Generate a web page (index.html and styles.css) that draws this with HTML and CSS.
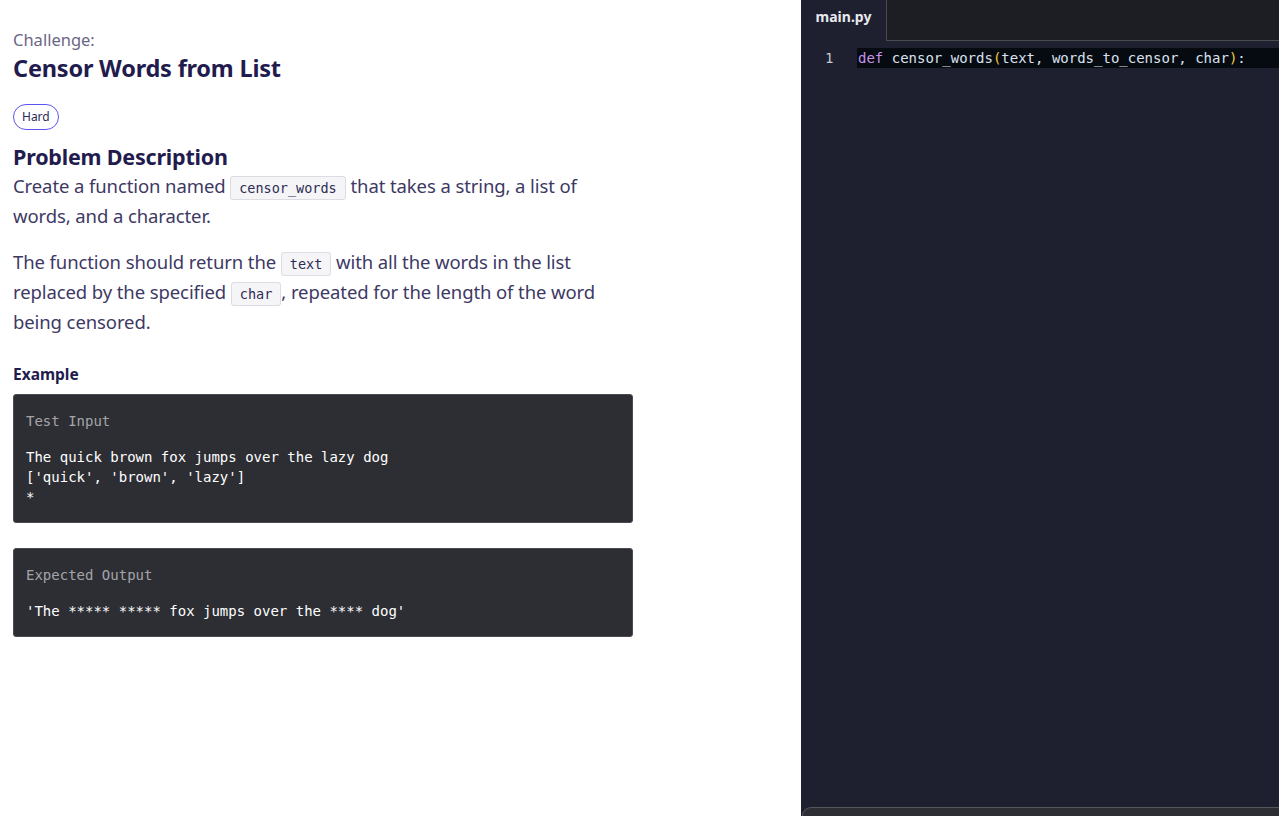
FILE: index.html
```html
<!DOCTYPE html>
<html>
<head>
<meta charset="utf-8">
<link rel="stylesheet" href="styles.css">
</head>
<body>
<div class="page">
  <main class="lesson">
    <div class="eyebrow">Challenge:</div>
    <h1 class="title">Censor Words from List</h1>
    <span class="badge">Hard</span>
    <h2 class="section">Problem Description</h2>
    <p class="para">Create a function named <code class="ic">censor_words</code> that takes a string, a list of words, and a character.</p>
    <p class="para">The function should return the <code class="ic">text</code> with all the words in the list replaced by the specified <code class="ic">char</code>, repeated for the length of the word being censored.</p>
    <h3 class="sub">Example</h3>
    <div class="codebox">
      <div class="cb-label">Test Input</div>
      <pre class="cb-code">The quick brown fox jumps over the lazy dog
['quick', 'brown', 'lazy']
*</pre>
    </div>
    <div class="codebox">
      <div class="cb-label">Expected Output</div>
      <pre class="cb-code">'The ***** ***** fox jumps over the **** dog'</pre>
    </div>
  </main>
  <section class="editor">
    <div class="tabs">
      <div class="tab">main.py</div>
      <div class="tab-rest"></div>
    </div>
    <div class="code">
      <div class="line">
        <span class="ln">1</span>
        <span class="lc"><span class="kw">def</span> censor_words<span class="par">(</span>text, words_to_censor, char<span class="par">)</span>:</span>
      </div>
    </div>
    <div class="bottom"></div>
  </section>
</div>
</body>
</html>
```
FILE: styles.css
```css
* { box-sizing: border-box; }
html, body { margin: 0; height: 100%; }
body { background: #fff; font-family: "Noto Sans", "Open Sans", sans-serif; }
.page { display: flex; height: 816px; overflow: hidden; }
.lesson { width: 801px; flex: none; padding: 29px 0 0 13px; }
.eyebrow { font-size: 16.5px; color: #6b6686; line-height: 22px; }
.title { margin: 2px 0 0; font-size: 23.5px; font-weight: 700; color: #221b4d; line-height: 30px; letter-spacing: -0.2px; }
.badge { display: inline-block; margin-top: 21px; height: 26px; padding: 0 8px; border: 1px solid #5a55f0; border-radius: 13px; font-size: 12px; line-height: 24px; color: #2d2a55; }
.section { margin: 13px 0 0; font-size: 21.5px; font-weight: 700; color: #221b4d; line-height: 28px; letter-spacing: -0.2px; }
.para { margin: 0 0 16px; width: 612px; font-size: 18.5px; line-height: 30px; color: #3e3964; letter-spacing: -0.1px; }
.ic { font-family: "DejaVu Sans Mono", monospace; font-size: 13.5px; line-height: 1; color: #2d2a55; background: #f5f5f7; border: 1px solid #dcdce2; border-radius: 3px; padding: 3px 8px; letter-spacing: 0; }
.sub { margin: 26px 0 0; font-size: 15.5px; font-weight: 700; color: #221b4d; line-height: 22px; }
.codebox { width: 620px; margin-top: 9px; background: #2d2e34; border: 1px solid #4a4b50; border-radius: 3px; padding: 16px 12px 15px; }
.codebox + .codebox { margin-top: 25px; }
.cb-label { font-family: "DejaVu Sans Mono", monospace; font-size: 14px; line-height: 20px; color: #a4a4a8; margin-bottom: 16px; }
.cb-code { margin: 0; font-family: "DejaVu Sans Mono", monospace; font-size: 14px; line-height: 20px; color: #ffffff; }
.editor { flex: 1; background: #1e2030; display: flex; flex-direction: column; position: relative; }
.tabs { display: flex; height: 41px; flex: none; }
.tab { width: 85px; padding-top: 7px; text-align: center; font-size: 14px; font-weight: 700; color: #e8e8ee; }
.tab-rest { flex: 1; background: #1d1e24; border-left: 1px solid #4b4c52; border-bottom: 1px solid #4b4c52; }
.code { flex: 1; padding-top: 7px; }
.line { display: flex; height: 20px; }
.ln { width: 56px; flex: none; padding-left: 24px; font-family: "DejaVu Sans Mono", monospace; font-size: 14px; line-height: 20px; color: #c8c8d0; }
.lc { display: block; flex: 1; height: 20px; padding-top: 1px; line-height: 18px; background: #060b12; padding-left: 1px; font-family: "DejaVu Sans Mono", monospace; font-size: 14px; color: #dbe2ee; white-space: pre; }
.kw { color: #c792ea; }
.par { color: #f5c93e; }
.bottom { height: 9px; margin-left: 1px; background: #2d2e33; border-top: 1px solid #55565c; border-left: 1px solid #55565c; border-top-left-radius: 10px; flex: none; }
```
